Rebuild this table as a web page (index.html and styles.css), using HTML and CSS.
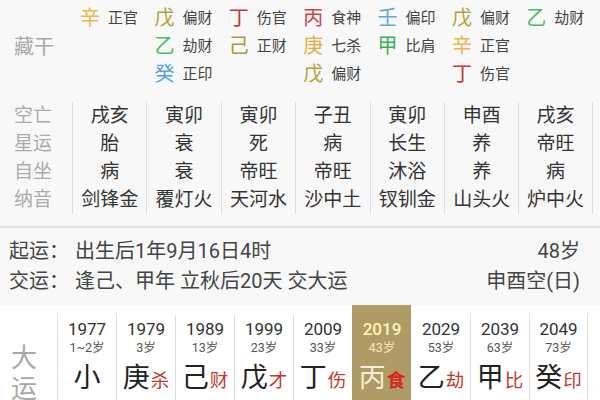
FILE: index.html
```html
<!DOCTYPE html>
<html lang="zh">
<head>
<meta charset="utf-8">
<link rel="stylesheet" href="styles.css">
</head>
<body>
<div class="app">
  <section class="canggan">
    <div class="cg-label">藏干</div>
    <div class="cg-col">
      <div class="hs"><span class="stem c-xin">辛</span><span class="god">正官</span></div>
    </div>
    <div class="cg-col">
      <div class="hs"><span class="stem c-wu">戊</span><span class="god">偏财</span></div>
      <div class="hs"><span class="stem c-yi">乙</span><span class="god">劫财</span></div>
      <div class="hs"><span class="stem c-gui">癸</span><span class="god">正印</span></div>
    </div>
    <div class="cg-col">
      <div class="hs"><span class="stem c-ding">丁</span><span class="god">伤官</span></div>
      <div class="hs"><span class="stem c-ji">己</span><span class="god">正财</span></div>
    </div>
    <div class="cg-col">
      <div class="hs"><span class="stem c-bing">丙</span><span class="god">食神</span></div>
      <div class="hs"><span class="stem c-geng">庚</span><span class="god">七杀</span></div>
      <div class="hs"><span class="stem c-wu">戊</span><span class="god">偏财</span></div>
    </div>
    <div class="cg-col">
      <div class="hs"><span class="stem c-ren">壬</span><span class="god">偏印</span></div>
      <div class="hs"><span class="stem c-jia">甲</span><span class="god">比肩</span></div>
    </div>
    <div class="cg-col">
      <div class="hs"><span class="stem c-wu">戊</span><span class="god">偏财</span></div>
      <div class="hs"><span class="stem c-xin">辛</span><span class="god">正官</span></div>
      <div class="hs"><span class="stem c-ding">丁</span><span class="god">伤官</span></div>
    </div>
    <div class="cg-col">
      <div class="hs"><span class="stem c-yi">乙</span><span class="god">劫财</span></div>
    </div>
  </section>

  <section class="pillars">
    <div class="pl-labels">
      <div>空亡</div><div>星运</div><div>自坐</div><div>纳音</div>
    </div>
    <div class="pl-col"><div>戌亥</div><div>胎</div><div>病</div><div>剑锋金</div></div>
    <div class="pl-col"><div>寅卯</div><div>衰</div><div>衰</div><div>覆灯火</div></div>
    <div class="pl-col"><div>寅卯</div><div>死</div><div>帝旺</div><div>天河水</div></div>
    <div class="pl-col"><div>子丑</div><div>病</div><div>帝旺</div><div>沙中土</div></div>
    <div class="pl-col"><div>寅卯</div><div>长生</div><div>沐浴</div><div>钗钏金</div></div>
    <div class="pl-col"><div>申酉</div><div>养</div><div>养</div><div>山头火</div></div>
    <div class="pl-col last"><div>戌亥</div><div>帝旺</div><div>病</div><div>炉中火</div></div>
  </section>

  <section class="info">
    <div class="info-row"><span class="k">起运：</span><span class="v">出生后1年9月16日4时</span><span class="r">48岁</span></div>
    <div class="info-row"><span class="k">交运：</span><span class="v">逢己、甲年 立秋后20天 交大运</span><span class="r">申酉空(日)</span></div>
  </section>

  <section class="dayun">
    <div class="dy-label">大<br>运</div>
    <div class="dy-col"><div class="dy-inner">
      <div class="yr">1977</div><div class="age">1~2岁</div>
      <div class="gz"><span class="gs">小</span></div>
      <div class="gz"><span class="gs">运</span></div>
    </div></div>
    <div class="dy-col"><div class="dy-inner">
      <div class="yr">1979</div><div class="age">3岁</div>
      <div class="gz"><span class="gs">庚</span><span class="tg">杀</span></div>
      <div class="gz"><span class="gs">辰</span><span class="tg">才</span></div>
    </div></div>
    <div class="dy-col"><div class="dy-inner">
      <div class="yr">1989</div><div class="age">13岁</div>
      <div class="gz"><span class="gs">己</span><span class="tg">财</span></div>
      <div class="gz"><span class="gs">卯</span><span class="tg">劫</span></div>
    </div></div>
    <div class="dy-col"><div class="dy-inner">
      <div class="yr">1999</div><div class="age">23岁</div>
      <div class="gz"><span class="gs">戊</span><span class="tg">才</span></div>
      <div class="gz"><span class="gs">寅</span><span class="tg">比</span></div>
    </div></div>
    <div class="dy-col"><div class="dy-inner">
      <div class="yr">2009</div><div class="age">33岁</div>
      <div class="gz"><span class="gs">丁</span><span class="tg">伤</span></div>
      <div class="gz"><span class="gs">丑</span><span class="tg">财</span></div>
    </div></div>
    <div class="dy-col cur"><div class="dy-inner">
      <div class="yr">2019</div><div class="age">43岁</div>
      <div class="gz"><span class="gs">丙</span><span class="tg">食</span></div>
      <div class="gz"><span class="gs">子</span><span class="tg">枭</span></div>
    </div></div>
    <div class="dy-col nb"><div class="dy-inner">
      <div class="yr">2029</div><div class="age">53岁</div>
      <div class="gz"><span class="gs">乙</span><span class="tg">劫</span></div>
      <div class="gz"><span class="gs">亥</span><span class="tg">印</span></div>
    </div></div>
    <div class="dy-col"><div class="dy-inner">
      <div class="yr">2039</div><div class="age">63岁</div>
      <div class="gz"><span class="gs">甲</span><span class="tg">比</span></div>
      <div class="gz"><span class="gs">戌</span><span class="tg">才</span></div>
    </div></div>
    <div class="dy-col last"><div class="dy-inner">
      <div class="yr">2049</div><div class="age">73岁</div>
      <div class="gz"><span class="gs">癸</span><span class="tg">印</span></div>
      <div class="gz"><span class="gs">酉</span><span class="tg">官</span></div>
    </div></div>
  </section>
</div>
</body>
</html>
```

FILE: styles.css
```css
html, body {
  margin: 0;
  padding: 0;
}
body {
  width: 600px;
  height: 400px;
  overflow: hidden;
  background: #f8f8f8;
  font-family: Roboto, "Noto Sans CJK SC", "Noto Sans", sans-serif;
  color: #333;
}
.app {
  width: 600px;
}

/* 藏干 */
.canggan {
  display: grid;
  grid-template-columns: 72px repeat(7, 74.4px);
  height: 93px;
}
.cg-label {
  align-self: center;
  padding-left: 14px;
  font-size: 20px;
  color: #a8a8a8;
  margin-top: -2px;
}
.cg-col {
  display: flex;
  flex-direction: column;
  padding: 4px 0 0 8px;
}
.hs {
  height: 28px;
  display: flex;
  align-items: center;
  gap: 8px;
}
.stem {
  font-size: 20px;
  line-height: 1;
}
.god {
  font-size: 15px;
  color: #444;
  line-height: 1;
}
.c-xin { color: #e9b949; }
.c-wu { color: #b3a23c; }
.c-ding { color: #c23a3a; }
.c-bing { color: #c8464e; }
.c-ren { color: #62a9d6; }
.c-yi { color: #48bb6a; }
.c-geng { color: #e2ac45; }
.c-jia { color: #34b05a; }
.c-gui { color: #55a2da; }
.c-ji { color: #a99a3a; }

/* 四柱信息 */
.pillars {
  display: grid;
  grid-template-columns: 72px repeat(7, 74.4px);
  padding: 9px 0 12px;
  border-bottom: 2px solid #e3e3e3;
}
.pl-labels {
  padding-left: 14px;
  font-size: 19px;
  line-height: 28px;
  color: #ababab;
}
.pl-col {
  border-left: 1px solid #dedede;
  text-align: center;
  font-size: 19px;
  line-height: 28px;
  color: #333;
}
.pl-col.last {
  border-right: 1px solid #dedede;
}

/* 起运 */
.info {
  padding: 8px 20px 9px 9px;
  font-size: 20px;
  color: #444;
}
.info-row {
  display: flex;
  line-height: 30px;
}
.info-row .k {
  width: 66px;
}
.info-row .r {
  margin-left: auto;
}

/* 大运 */
.dayun {
  background: #ffffff;
  display: grid;
  grid-template-columns: 57px repeat(9, 59px);
  height: 96px;
  overflow: hidden;
}
.dy-label {
  padding: 38px 0 0 11px;
  font-size: 26px;
  line-height: 31px;
  color: #a8a8a8;
}
.dy-col {
  display: flex;
  flex-direction: column;
}
.dy-inner {
  margin-top: 10px;
  flex: 1;
  border-left: 1px solid #dedede;
  text-align: center;
  padding-top: 3px;
}
.dy-col.last .dy-inner {
  border-right: 1px solid #dedede;
}
.dy-col.cur {
  background: #af9b65;
}
.dy-col.cur .dy-inner,
.dy-col.nb .dy-inner {
  border-left-color: transparent;
}
.yr {
  font-size: 17px;
  line-height: 22px;
  color: #333;
}
.age {
  font-size: 12.5px;
  line-height: 16px;
  color: #555;
}
.gz {
  margin-top: 6px;
  height: 32px;
  display: flex;
  justify-content: center;
  align-items: baseline;
}
.gz + .gz {
  margin-top: 5px;
}
.gs {
  font-size: 27px;
  line-height: 32px;
  color: #222;
}
.tg {
  font-size: 18.5px;
  line-height: 32px;
  color: #c0392b;
  margin-left: 1px;
}
.cur .yr {
  color: #fff3b8;
  font-weight: 500;
}
.cur .age {
  color: #f6e9b0;
}
.cur .gs {
  color: #f7efd6;
}
.cur .tg {
  color: #d8261e;
  font-weight: 700;
}
```
